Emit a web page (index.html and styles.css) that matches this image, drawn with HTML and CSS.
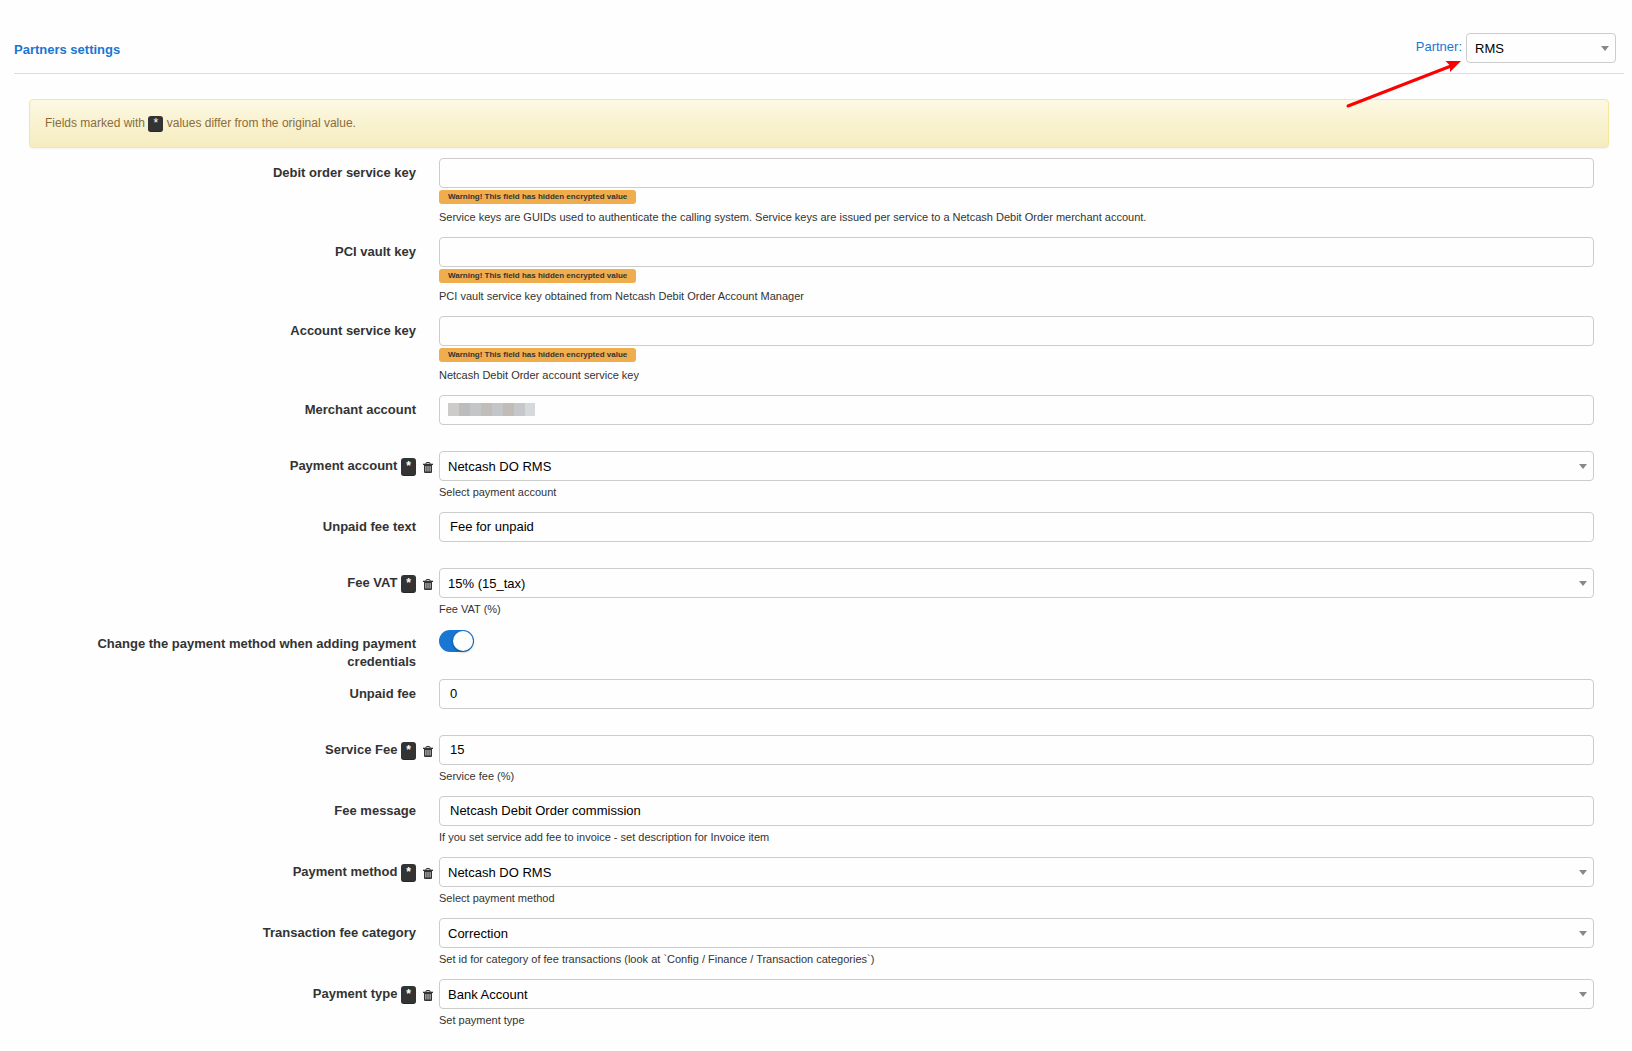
FILE: index.html
```html
<!DOCTYPE html>
<html lang="en">
<head>
<meta charset="utf-8">
<meta name="viewport" content="width=device-width, initial-scale=1">
<title>Partners settings</title>
<link rel="stylesheet" href="styles.css">
</head>
<body>
<svg class="sprite" aria-hidden="true">
  <symbol id="trash" viewBox="0 0 10 11">
    <path fill="none" stroke="currentColor" d="M3 2V1.2Q3 .5 3.700 .5H6.300Q7 .5 7 1.200V2"/>
    <path fill="currentColor" d="M0 1.700H10V3H0Z"/>
    <path fill="currentColor" fill-rule="evenodd" d="M1 3H9V10Q9 11 8 11H2Q1 11 1 10ZM2.500 4V9.500H3.300V4ZM4.600 4V9.500H5.400V4ZM6.700 4V9.500H7.500V4Z"/>
  </symbol>
</svg>
<header class="header">
  <h1 class="title">Partners settings</h1>
  <div class="partner">
    <label class="partner-label" for="partner">Partner:</label>
    <div class="select partner-select"><select class="control" id="partner"><option>RMS</option></select></div>
  </div>
  <svg class="arrow" viewBox="0 0 120 50" aria-hidden="true">
    <path d="M4 46L107 6" stroke="#f00" stroke-width="3" stroke-linecap="round"/>
    <path d="M117 1L101.500 1L106 5.500L106 12Z" fill="#f00"/>
  </svg>
</header>
<main>
  <div class="alert">Fields marked with <span class="mark">*</span> values differ from the original value.</div>
  <form class="form">
    <div class="row">
      <div class="name"><label for="debit-key">Debit order service key</label></div>
      <div class="field">
        <input class="control" type="text" id="debit-key">
        <span class="warning">Warning! This field has hidden encrypted value</span>
        <p class="help">Service keys are GUIDs used to authenticate the calling system. Service keys are issued per service to a Netcash Debit Order merchant account.</p>
      </div>
    </div>
    <div class="row">
      <div class="name"><label for="pci-key">PCI vault key</label></div>
      <div class="field">
        <input class="control" type="text" id="pci-key">
        <span class="warning">Warning! This field has hidden encrypted value</span>
        <p class="help">PCI vault service key obtained from Netcash Debit Order Account Manager</p>
      </div>
    </div>
    <div class="row">
      <div class="name"><label for="account-key">Account service key</label></div>
      <div class="field">
        <input class="control" type="text" id="account-key">
        <span class="warning">Warning! This field has hidden encrypted value</span>
        <p class="help">Netcash Debit Order account service key</p>
      </div>
    </div>
    <div class="row">
      <div class="name"><label for="merchant">Merchant account</label></div>
      <div class="field"><input class="control masked" type="text" id="merchant"></div>
    </div>
    <div class="row">
      <div class="name"><label for="pay-account">Payment account</label> <span class="mark">*</span><button class="reset" type="button" aria-label="Reset payment account"><svg><use href="#trash"/></svg></button></div>
      <div class="field">
        <div class="select"><select class="control" id="pay-account"><option>Netcash DO RMS</option></select></div>
        <p class="help">Select payment account</p>
      </div>
    </div>
    <div class="row">
      <div class="name"><label for="unpaid-text">Unpaid fee text</label></div>
      <div class="field"><input class="control" type="text" id="unpaid-text" value="Fee for unpaid"></div>
    </div>
    <div class="row">
      <div class="name"><label for="vat">Fee VAT</label> <span class="mark">*</span><button class="reset" type="button" aria-label="Reset fee VAT"><svg><use href="#trash"/></svg></button></div>
      <div class="field">
        <div class="select"><select class="control" id="vat"><option>15% (15_tax)</option></select></div>
        <p class="help">Fee VAT (%)</p>
      </div>
    </div>
    <div class="row">
      <div class="name"><label for="change-method">Change the payment method when adding payment credentials</label></div>
      <div class="toggle-field"><input class="toggle" type="checkbox" id="change-method" checked></div>
    </div>
    <div class="row">
      <div class="name"><label for="unpaid-fee">Unpaid fee</label></div>
      <div class="field"><input class="control" type="text" id="unpaid-fee" value="0"></div>
    </div>
    <div class="row">
      <div class="name"><label for="service-fee">Service Fee</label> <span class="mark">*</span><button class="reset" type="button" aria-label="Reset service fee"><svg><use href="#trash"/></svg></button></div>
      <div class="field">
        <input class="control" type="text" id="service-fee" value="15">
        <p class="help">Service fee (%)</p>
      </div>
    </div>
    <div class="row">
      <div class="name"><label for="fee-message">Fee message</label></div>
      <div class="field">
        <input class="control" type="text" id="fee-message" value="Netcash Debit Order commission">
        <p class="help">If you set service add fee to invoice - set description for Invoice item</p>
      </div>
    </div>
    <div class="row">
      <div class="name"><label for="pay-method">Payment method</label> <span class="mark">*</span><button class="reset" type="button" aria-label="Reset payment method"><svg><use href="#trash"/></svg></button></div>
      <div class="field">
        <div class="select"><select class="control" id="pay-method"><option>Netcash DO RMS</option></select></div>
        <p class="help">Select payment method</p>
      </div>
    </div>
    <div class="row">
      <div class="name"><label for="category">Transaction fee category</label></div>
      <div class="field">
        <div class="select"><select class="control" id="category"><option>Correction</option></select></div>
        <p class="help">Set id for category of fee transactions (look at `Config / Finance / Transaction categories`)</p>
      </div>
    </div>
    <div class="row">
      <div class="name"><label for="pay-type">Payment type</label> <span class="mark">*</span><button class="reset" type="button" aria-label="Reset payment type"><svg><use href="#trash"/></svg></button></div>
      <div class="field">
        <div class="select"><select class="control" id="pay-type"><option>Bank Account</option></select></div>
        <p class="help">Set payment type</p>
      </div>
    </div>
  </form>
</main>
</body>
</html>
```
FILE: styles.css
```css
* { box-sizing: border-box; }

body {
  margin: 0;
  background: #fefefe;
  color: #333;
  font: 13px/18px "Liberation Sans", Arial, sans-serif;
}

.sprite { display: none; }

/* Header */
.header {
  position: relative;
  display: flex;
  justify-content: space-between;
  align-items: center;
  margin: 24px 8px 0 14px;
  padding: 9px 8px 10px 0;
  border-bottom: 1px solid #ddd;
}
.title {
  margin: 0;
  padding-top: 4px;
  color: #1976d2;
  font-size: 13px;
  line-height: 18px;
}
.partner { display: flex; gap: 4px; }
.partner-label {
  padding-top: 5px;
  color: #1976d2;
}
.partner-select { width: 150px; }
.arrow {
  position: absolute;
  top: 36px;
  right: 160px;
  width: 120px;
  height: 50px;
  pointer-events: none;
}

/* Notice */
.alert {
  margin: 25px 23px 10px 29px;
  padding: 14px 15px 15px;
  border: 1px solid #f5e79e;
  border-radius: 4px;
  background: linear-gradient(#fcf8e3, #f5ecbf);
  box-shadow: 0 1px 2px rgba(0, 0, 0, .05);
  color: #8a6d3b;
  font-size: 12px;
}
.mark {
  display: inline-block;
  width: 15px;
  height: 16px;
  border-radius: 3px;
  background: #333;
  box-shadow: inset 0 -1px 0 rgba(0, 0, 0, .25);
  color: #fff;
  font-size: 12px;
  line-height: 14px;
  text-align: center;
  vertical-align: middle;
}

/* Form rows */
.form { padding: 0 38px 0 54px; }
.row {
  display: grid;
  grid-template-columns: minmax(0, 1fr) minmax(0, 3fr);
  padding-bottom: 8px;
}
.name {
  position: relative;
  padding: 6px 23px 0 0;
  font-weight: bold;
  text-align: right;
}
.name .mark {
  height: 18px;
  line-height: 16px;
  vertical-align: top;
  margin-top: 1px;
}
.reset {
  position: absolute;
  top: 11px;
  right: 6px;
  width: 10px;
  height: 11px;
  padding: 0;
  border: 0;
  background: none;
  color: #333;
}
.reset svg { display: block; width: 10px; height: 11px; }
.field { min-height: 48px; }

.control {
  display: block;
  width: 100%;
  height: 30px;
  margin: 0;
  padding: 0 10px 2px;
  border: 1px solid #ccc;
  border-radius: 4px;
  background: #fefefe;
  color: #000;
  font: inherit;
  appearance: none;
}
.select { position: relative; }
.select .control { padding: 2px 24px 0 8px; }
.select::after {
  content: "";
  position: absolute;
  top: 13px;
  right: 7px;
  border: solid transparent;
  border-width: 5px 4px 0;
  border-top-color: #888;
  pointer-events: none;
}
.masked {
  background: #fefefe linear-gradient(90deg,
    #cdcbc9 11px, #bdbcbc 11px 22px, #c4c5c7 22px 33px, #c1bdbb 33px 44px,
    #c3c5c8 44px 55px, #c2bcb8 55px 66px, #c6c7ca 66px 77px, #d6d9dc 77px)
    no-repeat 8px 7px / 87px 13px;
}
.warning {
  display: block;
  width: fit-content;
  height: 14px;
  margin-top: 2px;
  padding: 0 9px;
  border-radius: 3px;
  background: #f0ad4e;
  font-size: 8px;
  font-weight: bold;
  line-height: 13px;
}
.help {
  margin: 0;
  padding: 3px 0 4px;
  font-size: 11px;
  line-height: 16px;
}
.warning + .help { padding-top: 5px; }

/* Switch */
.toggle {
  display: block;
  width: 35px;
  height: 22px;
  margin: 1px 0 0;
  padding: 1px;
  border-radius: 11px;
  background: #ccc;
  appearance: none;
}
.toggle::before {
  content: "";
  display: block;
  width: 20px;
  height: 20px;
  border-radius: 50%;
  background: #fff;
  box-shadow: 0 1px 3px rgba(0, 0, 0, .4);
}
.toggle:checked { background: #1976d2; }
.toggle:checked::before { margin-left: auto; }
```
